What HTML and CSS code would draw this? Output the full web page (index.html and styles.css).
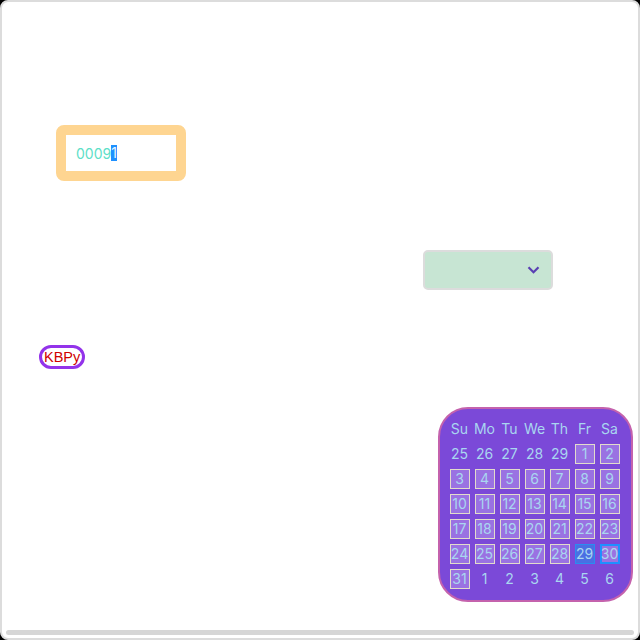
FILE: index.html
```html
<!DOCTYPE html>
<html>
<head>
<meta charset="utf-8">
<link rel="stylesheet" href="styles.css">
</head>
<body>
<div class="frame">
  <div class="field"><div class="field-inner">0009<span class="sel">1</span></div></div>
  <div class="select">
    <svg class="chev" width="13" height="8" viewBox="0 0 13 8"><path d="M1.5 1.2 L6.5 6.2 L11.5 1.2" fill="none" stroke="#5a3fb3" stroke-width="2.2"/></svg>
  </div>
  <div class="badge">KBPy</div>
  <div class="cal">
    <div class="grid">
      <span>Su</span><span>Mo</span><span>Tu</span><span>We</span><span>Th</span><span>Fr</span><span>Sa</span>
      <span>25</span><span>26</span><span>27</span><span>28</span><span>29</span><span class="d">1</span><span class="d">2</span>
      <span class="d">3</span><span class="d">4</span><span class="d">5</span><span class="d">6</span><span class="d">7</span><span class="d">8</span><span class="d">9</span>
      <span class="d">10</span><span class="d">11</span><span class="d">12</span><span class="d">13</span><span class="d">14</span><span class="d">15</span><span class="d">16</span>
      <span class="d">17</span><span class="d">18</span><span class="d">19</span><span class="d">20</span><span class="d">21</span><span class="d">22</span><span class="d">23</span>
      <span class="d">24</span><span class="d">25</span><span class="d">26</span><span class="d">27</span><span class="d">28</span><span class="d today">29</span><span class="d focus">30</span>
      <span class="d">31</span><span>1</span><span>2</span><span>3</span><span>4</span><span>5</span><span>6</span>
    </div>
  </div>
  <div class="scrollbar"></div>
</div>
</body>
</html>
```
FILE: styles.css
```css
html { background: #000; }
body { margin: 0; }
.frame {
  width: 640px; height: 640px; box-sizing: border-box;
  border: 2px solid #dcdcdc; border-radius: 8px; background: #fff;
  display: flex; flex-direction: column; align-items: flex-start;
  overflow: hidden;
}
.field {
  margin: 123px 0 0 54px;
  width: 130px; height: 56px; box-sizing: border-box;
  border: 10px solid #fed591; border-radius: 8px; background: #fff;
}
.field-inner {
  padding: 0 0 0 10px; height: 36px; display: flex; align-items: center;
  font-family: Inter, sans-serif; font-size: 14px; color: #5ee0c8;
}
.sel { background: #1e90ff; color: #e8f4ff; line-height: 16px; }
.select {
  margin: 69px 0 0 421px;
  width: 130px; height: 40px; box-sizing: border-box;
  border: 2px solid #dcdcdc; border-radius: 5px; background: #c7e5d3;
  display: flex; align-items: center; justify-content: flex-end; padding-right: 11px;
}
.chev { display: block; }
.badge {
  margin: 55px 0 0 37px;
  height: 24px; box-sizing: border-box; padding: 0 2px;
  border: 3px solid #9333ea; border-radius: 12px;
  font-family: "Liberation Sans", Arial, sans-serif; font-size: 14.5px; color: #d00000;
  display: flex; align-items: center;
}
.cal {
  margin: 38px 0 0 436px;
  width: 195px; height: 195px; box-sizing: border-box;
  border: 2px solid #c462ad; border-radius: 30px; background: #7b49d8;
  padding: 7px 9px 9px 7px;
}
.grid {
  display: grid; grid-template-columns: repeat(7, 25px); grid-auto-rows: 25px;
  font-family: Inter, sans-serif; font-size: 14px; color: #a9d6f0;
  place-items: center;
}
.grid span { display: flex; align-items: center; justify-content: center; }
.grid .d {
  width: 20px; height: 20px; box-sizing: border-box;
  border: 1px solid #e2dccb; background: #9a72e2;
}
.grid .today { background: #4a6fe3; border-color: #2a8df0; }
.grid .focus { border: 2px solid #1e90ff; }
.scrollbar {
  margin: 28px 0 0 4px;
  width: 628px; height: 5px; border-radius: 3px; background: #d6d6d6;
}
```
